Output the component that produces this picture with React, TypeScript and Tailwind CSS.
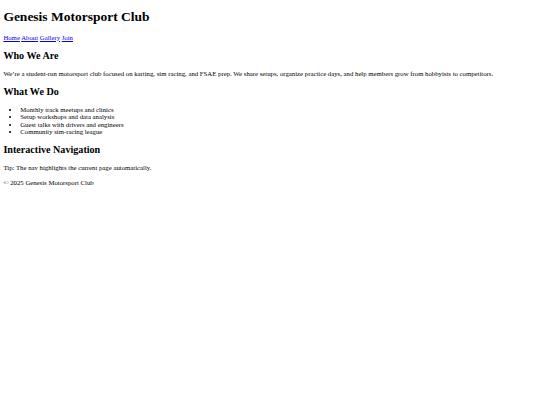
export default function App() {
  return (
    <div className="px-[3.375px] text-[6.75px] text-black bg-white min-h-screen font-['Liberation_Serif','Times_New_Roman',serif] leading-[7.59px]">
      <header>
        <h1 className="text-[13.5px] font-bold my-[9.045px] leading-[15.51px]">Genesis Motorsport Club</h1>
        <nav>
          <a href="#" className="text-[#0000ee] underline">Home</a>{" "}
          <a href="#" className="text-[#0000ee] underline">About</a>{" "}
          <a href="#" className="text-[#0000ee] underline">Gallery</a>{" "}
          <a href="#" className="text-[#0000ee] underline">Join</a>
        </nav>
      </header>
      <main>
        <section>
          <h2 className="text-[10.125px] font-bold my-[8.404px] leading-[11.63px]">Who We Are</h2>
          <p className="my-[6.75px]">
            We’re a student-run motorsport club focused on karting, sim racing, and FSAE prep. We share setups, organize practice days, and help members grow from hobbyists to competitors.
          </p>
        </section>
        <section>
          <h2 className="text-[10.125px] font-bold my-[8.404px] leading-[11.63px]">What We Do</h2>
          <ul className="list-disc pl-[16.875px] my-[6.75px]">
            <li>Monthly track meetups and clinics</li>
            <li>Setup workshops and data analysis</li>
            <li>Guest talks with drivers and engineers</li>
            <li>Community sim-racing league</li>
          </ul>
        </section>
        <section>
          <h2 className="text-[10.125px] font-bold my-[8.404px] leading-[11.63px]">Interactive Navigation</h2>
          <p className="my-[6.75px]">Tip: The nav highlights the current page automatically.</p>
        </section>
      </main>
      <footer>
        <p className="my-[6.75px]">© 2025 Genesis Motorsport Club</p>
      </footer>
    </div>
  );
}
